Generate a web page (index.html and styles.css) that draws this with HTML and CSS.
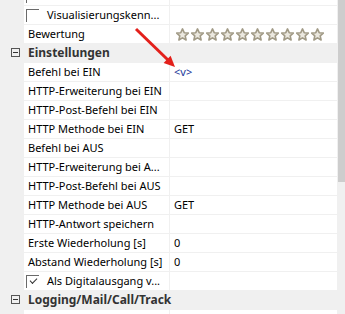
FILE: index.html
```html
<!DOCTYPE html>
<html lang="de">
  <head>
    <meta charset="UTF-8" />
    <title>Eigenschaften</title>
    <link rel="stylesheet" href="styles.css">
  </head>
  <body>
    <svg width="0" height="0" class="defs">
      <symbol id="star" viewBox="0 0 13 13">
        <polygon points="6.5,0.9 8.2,4.7 12.3,5.1 9.2,7.9 10.1,12 6.5,9.9 2.9,12 3.8,7.9 0.7,5.1 4.8,4.7" />
      </symbol>
    </svg>

    <div class="panel">
      <div class="grid">
        <!-- Allgemein (Ende) -->
        <div class="row first">
          <div class="gutter"></div>
          <div class="name"><span class="check"></span>Verwenden</div>
          <div class="value"></div>
        </div>
        <div class="row">
          <div class="gutter"></div>
          <div class="name"><span class="check"></span>Visualisierungskenn...</div>
          <div class="value"></div>
        </div>
        <div class="row">
          <div class="gutter"></div>
          <div class="name">Bewertung</div>
          <div class="value stars">
            <svg><use href="#star" /></svg><svg><use href="#star" /></svg><svg><use href="#star" /></svg><svg><use href="#star" /></svg><svg><use href="#star" /></svg><svg><use href="#star" /></svg><svg><use href="#star" /></svg><svg><use href="#star" /></svg><svg><use href="#star" /></svg><svg><use href="#star" /></svg>
          </div>
        </div>

        <!-- Einstellungen -->
        <div class="row category">
          <div class="gutter"><span class="toggle"></span></div>
          <div class="name">Einstellungen</div>
        </div>
        <div class="row">
          <div class="gutter"></div>
          <div class="name">Befehl bei EIN</div>
          <div class="value cmd">&lt;v&gt;</div>
        </div>
        <div class="row">
          <div class="gutter"></div>
          <div class="name">HTTP-Erweiterung bei EIN</div>
          <div class="value"></div>
        </div>
        <div class="row">
          <div class="gutter"></div>
          <div class="name">HTTP-Post-Befehl bei EIN</div>
          <div class="value"></div>
        </div>
        <div class="row">
          <div class="gutter"></div>
          <div class="name">HTTP Methode bei EIN</div>
          <div class="value">GET</div>
        </div>
        <div class="row">
          <div class="gutter"></div>
          <div class="name">Befehl bei AUS</div>
          <div class="value"></div>
        </div>
        <div class="row">
          <div class="gutter"></div>
          <div class="name">HTTP-Erweiterung bei A...</div>
          <div class="value"></div>
        </div>
        <div class="row">
          <div class="gutter"></div>
          <div class="name">HTTP-Post-Befehl bei AUS</div>
          <div class="value"></div>
        </div>
        <div class="row">
          <div class="gutter"></div>
          <div class="name">HTTP Methode bei AUS</div>
          <div class="value">GET</div>
        </div>
        <div class="row">
          <div class="gutter"></div>
          <div class="name">HTTP-Antwort speichern</div>
          <div class="value"></div>
        </div>
        <div class="row">
          <div class="gutter"></div>
          <div class="name">Erste Wiederholung [s]</div>
          <div class="value">0</div>
        </div>
        <div class="row">
          <div class="gutter"></div>
          <div class="name">Abstand Wiederholung [s]</div>
          <div class="value">0</div>
        </div>
        <div class="row">
          <div class="gutter"></div>
          <div class="name"><span class="check checked"></span>Als Digitalausgang v...</div>
          <div class="value"></div>
        </div>

        <!-- Logging -->
        <div class="row category">
          <div class="gutter"><span class="toggle"></span></div>
          <div class="name">Logging/Mail/Call/Track</div>
        </div>
        <div class="row">
          <div class="gutter"></div>
          <div class="name"></div>
          <div class="value"></div>
        </div>
      </div>

      <div class="scrollbar"><div class="thumb"></div></div>

      <!-- Markierung -->
      <svg class="arrow" width="345" height="314">
        <line x1="136" y1="29" x2="168" y2="60" />
        <polygon points="175,67 163.6,62.9 170.6,55.7" />
      </svg>
    </div>
  </body>
</html>
```

FILE: styles.css
```css
body {
  margin: 0;
  background: #ffffff;
  font-family: "Noto Sans", "Open Sans", sans-serif;
  font-size: 11px;
  color: #000000;
}

.defs {
  position: absolute;
}

.panel {
  position: relative;
  width: 345px;
  height: 314px;
  overflow: hidden;
  display: flex;
}

.grid {
  width: 337px;
  display: flex;
  flex-direction: column;
  margin-top: -13px;
}

.row {
  display: grid;
  grid-template-columns: 24px 146px 1fr;
  height: 18px;
  border-bottom: 1px solid #f0f0f0;
  flex-shrink: 0;
}

.gutter {
  background: #f0f0f0;
  position: relative;
}

.name {
  border-right: 1px solid #f0f0f0;
  padding-left: 4px;
  line-height: 18px;
  white-space: nowrap;
  overflow: hidden;
  display: flex;
  align-items: center;
}

.value {
  padding-left: 4px;
  line-height: 18px;
  white-space: nowrap;
}

.cmd {
  color: #22389a;
}

.check {
  width: 13px;
  height: 13px;
  box-sizing: border-box;
  border-top: 1px solid #6a6a6a;
  border-left: 1px solid #6a6a6a;
  margin-left: -2px;
  margin-right: 8px;
  position: relative;
  flex-shrink: 0;
}

.checked::after {
  content: "";
  position: absolute;
  left: 3px;
  top: 2px;
  width: 6px;
  height: 3px;
  border-left: 1px solid #333333;
  border-bottom: 1px solid #333333;
  transform: rotate(-45deg);
}

.stars {
  display: flex;
  align-items: center;
  gap: 2px;
  padding-left: 6px;
}

.stars svg {
  width: 13px;
  height: 13px;
  fill: #ebe8df;
  stroke: #a19a86;
  stroke-width: 1.6;
  stroke-linejoin: round;
}

.category {
  background: #f0f0f0;
  border-bottom-color: #f0f0f0;
}

.category .name {
  border-right: none;
  font-weight: bold;
  font-size: 12px;
  color: #333333;
  overflow: visible;
}

.toggle {
  position: absolute;
  left: 11px;
  top: 4px;
  width: 9px;
  height: 9px;
  box-sizing: border-box;
  border: 1px solid #555555;
}

.toggle::after {
  content: "";
  position: absolute;
  left: 1px;
  top: 3px;
  width: 5px;
  height: 1px;
  background: #333333;
}

.scrollbar {
  width: 8px;
  background: #f0f0f0;
  padding-left: 1px;
  box-sizing: border-box;
}

.thumb {
  height: 182px;
  background: #cdcdcd;
}

.arrow {
  position: absolute;
  left: 0;
  top: 0;
  pointer-events: none;
}

.arrow line {
  stroke: #e3201b;
  stroke-width: 3;
}

.arrow polygon {
  fill: #e3201b;
}
```
